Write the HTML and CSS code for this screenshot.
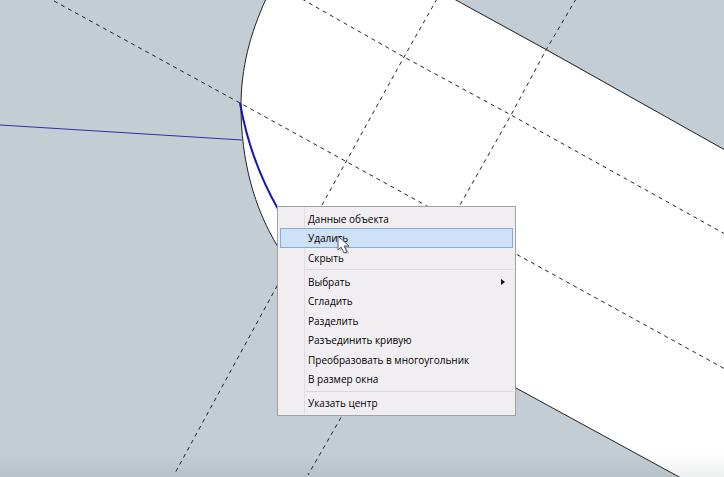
FILE: index.html
```html
<!DOCTYPE html>
<html lang="ru">
<head>
<meta charset="utf-8">
<meta name="viewport" content="width=device-width, initial-scale=1">
<title>Чертёж</title>
<link rel="stylesheet" href="styles.css">
</head>
<body>
<main class="viewport">
  <svg class="drawing" viewBox="0 0 724 477" preserveAspectRatio="xMinYMin slice" aria-hidden="true">
    <defs>
      <linearGradient id="shade" x1="0" y1="0" x2="0" y2="1">
        <stop offset="0" stop-color="#505860" stop-opacity="0"/>
        <stop offset="1" stop-color="#505860" stop-opacity=".1"/>
      </linearGradient>
    </defs>
    <path class="face" d="M266 -1C250 34 241 68 241 106C241 160 254 208 278 247L400 325L516 388L681 478H725V150L454 -1Z"/>
    <path class="edge" d="M266 -1C250 34 241 68 241 106C241 160 254 208 278 247"/>
    <path class="edge" d="M454 -1L547 50L725 150M516 388L681 478"/>
    <g class="guide">
      <path d="M54 1L240 103L425 205L516 254L725 369"/>
      <path d="M302 -1L404 57L511 115L725 234"/>
      <path d="M437 -1L404 57L347 160L277 286L174 475"/>
      <path d="M576 -1L546 50L511 115L460 205L343 414L308 475"/>
    </g>
    <path class="radius" d="M0 125L242 140"/>
    <path class="selected" d="M240 103Q250 160 278 209"/>
    <rect x="0" y="453" width="724" height="24" fill="url(#shade)"/>
  </svg>

  <div class="menu" role="menu">
    <button class="item" role="menuitem">Данные объекта</button>
    <button class="item active" role="menuitem">Удалить</button>
    <button class="item" role="menuitem">Скрыть</button>
    <hr class="separator">
    <button class="item submenu" role="menuitem" aria-haspopup="true">Выбрать</button>
    <button class="item" role="menuitem">Сгладить</button>
    <button class="item" role="menuitem">Разделить</button>
    <button class="item" role="menuitem">Разъединить кривую</button>
    <button class="item" role="menuitem">Преобразовать в многоугольник</button>
    <button class="item" role="menuitem">В размер окна</button>
    <hr class="separator">
    <button class="item" role="menuitem">Указать центр</button>
  </div>

  <svg class="cursor" viewBox="0 0 13 19" aria-hidden="true">
    <path class="cursor-shadow" d="M3 3V16L6 13L9 19L12 18L9 12H13Z"/>
    <path d="M1 1V15L4 12L7 18L10 17L7 11H12Z"/>
  </svg>
</main>
</body>
</html>
```

FILE: styles.css
```css
* {
  box-sizing: border-box;
}

body {
  margin: 0;
  background: #c4ccd4;
  font-family: "Open Sans", "Noto Sans", sans-serif;
}

.viewport {
  position: relative;
  height: 100vh;
  overflow: hidden;
}

.drawing {
  display: block;
  width: 100%;
  height: 100%;
}

.face {
  fill: #fff;
}

.edge,
.guide,
.radius,
.selected {
  fill: none;
  stroke: #222;
  stroke-width: 1;
}

.guide {
  stroke-dasharray: 4 4;
}

.radius {
  stroke: #2c30a4;
}

.selected {
  stroke: #1616b4;
  stroke-width: 2;
}

.menu {
  position: absolute;
  left: 277px;
  top: 206px;
  display: flex;
  flex-direction: column;
  width: 239px;
  height: 210px;
  padding: 2px;
  border: 1px solid #a0a2a5;
  background: linear-gradient(90deg, transparent 26px, #dfdfe2 26px, #dfdfe2 27px, transparent 27px) #f0eef1;
}

.item {
  display: flex;
  flex: 1;
  align-items: center;
  justify-content: space-between;
  min-height: 0;
  padding: 0 7px 0 27px;
  border: 1px solid transparent;
  background: none;
  color: #000;
  font: inherit;
  font-size: 10px;
  font-weight: 500;
  line-height: 16px;
  text-align: left;
}

.active {
  border-color: #84acd4;
  background: #cfe1f6;
}

.submenu::after {
  content: "";
  border: solid transparent;
  border-width: 3px 0 3px 4px;
  border-left-color: #111;
}

.separator {
  width: 208px;
  height: 1px;
  margin: 2px 0 2px auto;
  border: 0;
  background: #d9d8dc;
}

.cursor {
  position: absolute;
  left: 337px;
  top: 235px;
  width: 13px;
  height: 19px;
  fill: #fff;
  stroke: #555b66;
  stroke-width: 1;
}

.cursor-shadow {
  fill: #8890a0;
  stroke: none;
  opacity: .6;
}
```
